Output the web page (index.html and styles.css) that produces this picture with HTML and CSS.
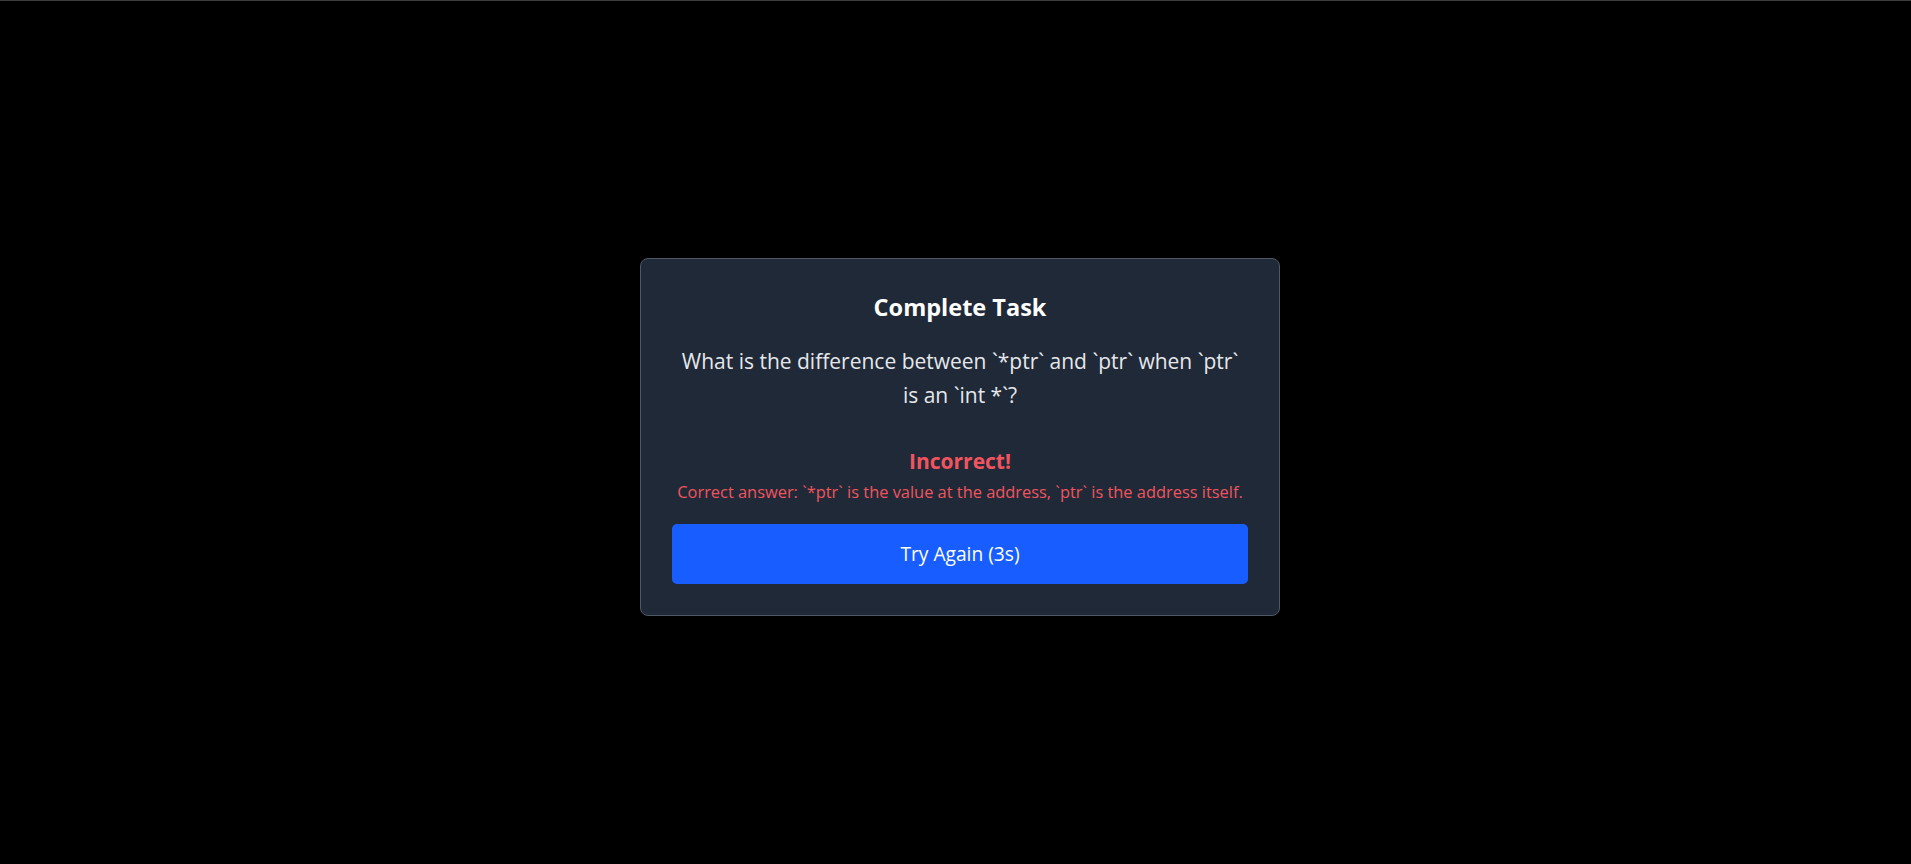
FILE: index.html
```html
<!DOCTYPE html>
<html lang="en">
<head>
<meta charset="utf-8">
<title>Complete Task</title>
<link rel="stylesheet" href="styles.css">
</head>
<body>
<div class="topline"></div>
<main class="screen">
  <section class="card">
    <h2 class="title">Complete Task</h2>
    <p class="question">What is the difference between `*ptr` and `ptr` when `ptr` is an `int *`?</p>
    <div class="result">
      <p class="result-title">Incorrect!</p>
      <p class="result-detail">Correct answer: `*ptr` is the value at the address, `ptr` is the address itself.</p>
    </div>
    <button class="btn" type="button">Try Again (3s)</button>
  </section>
</main>
</body>
</html>
```
FILE: styles.css
```css
html, body {
  margin: 0;
  padding: 0;
  background: #000;
}
body {
  font-family: "Open Sans", "Noto Sans", "Liberation Sans", sans-serif;
  color: #e5e7eb;
}
.topline {
  height: 1px;
  background: #3c3c3c;
}
.screen {
  box-sizing: border-box;
  height: 863px;
  padding: 8px 0 0 9px;
  display: flex;
  align-items: center;
  justify-content: center;
}
.card {
  box-sizing: border-box;
  width: 640px;
  background: #1f2937;
  border: 1px solid #4f5866;
  border-radius: 8px;
  padding: 31px;
  text-align: center;
}
.title {
  margin: 1px 0 0;
  font-size: 23.5px;
  line-height: 32px;
  font-weight: 700;
  color: #ffffff;
}
.question {
  margin: 21px 0 0;
  font-size: 21px;
  line-height: 34px;
  color: #e5e7eb;
}
.result {
  margin-top: 35px;
}
.result-title {
  margin: 0;
  font-size: 21px;
  line-height: 28px;
  font-weight: 700;
  color: #f2545f;
}
.result-detail {
  margin: 5px 0 0;
  font-size: 16.4px;
  line-height: 24px;
  color: #f2545f;
}
.btn {
  display: block;
  width: 100%;
  height: 60px;
  margin-top: 20px;
  border: none;
  border-radius: 5px;
  background: #175dff;
  color: #ffffff;
  font-family: inherit;
  font-size: 19.2px;
}
```
